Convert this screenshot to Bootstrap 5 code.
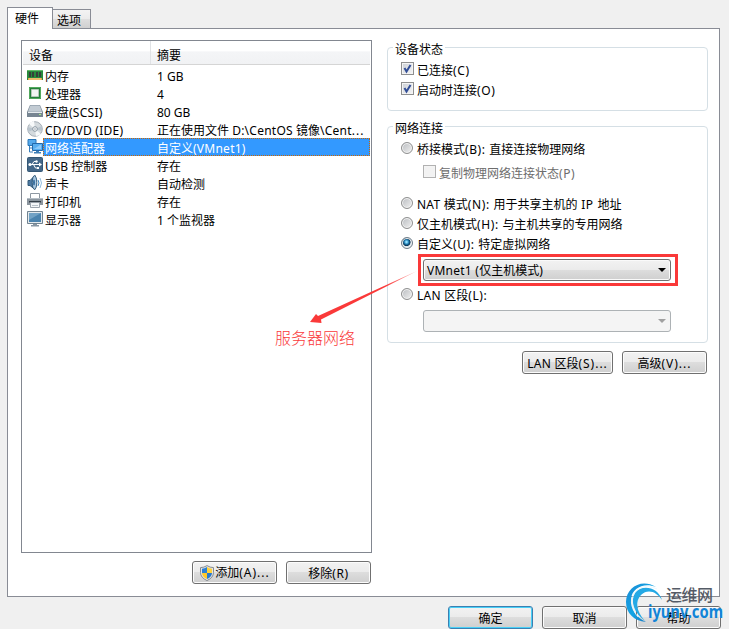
<!DOCTYPE html>
<html lang="zh-CN">
  <head>
    <meta charset="UTF-8" />
    <meta name="viewport" content="width=device-width, initial-scale=1.0" />
    <link
      href="https://cdn.jsdelivr.net/npm/bootstrap@5.3.3/dist/css/bootstrap.min.css"
      rel="stylesheet"
    />
    <title>虚拟机设置</title>
    <style>
      body {
        width: 729px;
        height: 629px;
        background: #f0f0f0;
        color: #000;
        font: 12px/18px "Noto Sans", "Noto Sans CJK SC", sans-serif;
      }
      svg { display: block; flex: none; }
      .lat { letter-spacing: .25px; }
      .key { letter-spacing: .6px; }
      .more { letter-spacing: 1px; }

      /* tabs */
      .tabs { height: 28px; padding: 7px 0 0 7px; }
      .tabs .nav-link { border: 1px solid #898c95; border-bottom: 0; border-radius: 0; color: #000; padding: 0; text-align: center; }
      .tabs .nav-link.active { width: 46px; height: 22px; line-height: 22px; padding-right: 6px; background: #fff; z-index: 1; }
      .tabs .other { width: 38px; height: 19px; line-height: 21px; margin-top: 2px; padding-right: 5px; border-left: 0; background: linear-gradient(#f3f3f3, #ebebeb 50%, #dedede 51%, #d0d0d0); }
      .panel { height: 569px; margin: 0 9px 0 7px; padding: 11px 11px 0 13px; border: 1px solid #898c95; background: #fff; }

      /* device list */
      .left-side { width: 351px; }
      .devices { height: 513px; border: 1px solid #828790; }
      .devices-head { height: 24px; margin: 0 1px 1px; border-bottom: 1px solid #d5d5d5; background: linear-gradient(#fff 45%, #f4f5f7 46%, #f1f2f4); line-height: 29px; }
      .devices-head .col-name { width: 128px; padding-left: 6px; border-right: 1px solid #e0e2e5; }
      .devices-head .col-info { padding-left: 6px; }
      .device { height: 18px; padding: 0 1px 0 5px; line-height: 21px; }
      .device > svg { margin-top: 1px; }
      .device.selected > svg { margin-top: 0; }
      .device-text { height: 18px; padding-left: 1px; white-space: nowrap; }
      .device-text .dev-name { width: 113px; padding-left: 1px; }
      .device.selected .device-text { padding-left: 0; border: 1px dotted #cc6600; background: #3399ff; color: #fff; line-height: 19px; }

      /* buttons */
      .btn-win { height: 23px; width: 85px; padding: 0; border: 1px solid #707070; border-radius: 3px; box-shadow: inset 0 0 0 1px #fcfcfc; background: linear-gradient(#f2f2f2, #ebebeb 49%, #dddddd 50%, #cfcfcf); color: #000; font-size: 12px; line-height: 24px; white-space: nowrap; }
      .btn-win.wide { width: 91px; }
      .btn-win.default { border-color: #3c7fb1; box-shadow: inset 0 0 0 1px #48d0f7; }
      .list-buttons { gap: 9px; margin-top: 8px; padding-right: 1px; }
      .net-buttons { gap: 9px; margin-top: 8px; padding-right: 1px; }
      .dialog-buttons { gap: 9px; margin-top: 9px; padding-right: 8px; }

      /* group boxes */
      .right-side { width: 321px; padding-top: 7px; }
      .group { border: 1px solid #d5dfe5; border-radius: 4px; padding: 0 0 0 13px; }
      .group-title { width: fit-content; height: 18px; margin: -9px 0 0 -8px; padding: 0 2px; line-height: 21px; background: #fff; }
      .status-box { height: 64px; margin-bottom: 15px; }
      .network-box { height: 217px; }
      .option { height: 20px; gap: 3px; line-height: 23px; white-space: nowrap; }
      .option.first { margin-top: 2px; }
      .option.sub { margin: 4px 0 11px 22px; color: #6d6d6d; }
      .option.last { margin-top: -1px; line-height: 22px; }
      .check { width: 13px; height: 13px; margin-top: 3px; border: 1px solid #8e8f8f; box-shadow: inset 0 0 0 1px #f4f4f4; background: linear-gradient(135deg, #cbcfd5, #f6f6f6); }
      .check.off { border-color: #b1b1b1; background: #f2f2f2; }
      .dot { width: 12px; height: 12px; flex: none; margin: 4px 1px 0 0; border: 1px solid #8e8f8f; border-radius: 50%; box-shadow: inset 0 0 0 1px #f4f4f4; background: linear-gradient(135deg, #b9bcc0, #f1f1f1); }
      .option.last .dot { margin-top: 3px; }
      .dot.on { border-color: #6d7c88; background: radial-gradient(circle at 45% 40%, #8fe0ff 0 8%, #1b7ab0 28%, #0b3150 46%, #d8e4ea 54%); }
      .highlight { width: 260px; height: 32px; margin: 1px 0 0 17px; border: 3px solid #fa3939; padding: 2px; }
      .combo { width: 248px; height: 22px; padding: 0 4px 0 3px; border: 1px solid #707070; border-radius: 3px; box-shadow: inset 0 0 0 1px #fafafa; background: linear-gradient(#f2f2f2, #ebebeb 49%, #dddddd 50%, #cfcfcf); line-height: 22px; }
      .combo > span { padding-top: 2px; }
      .combo.off { margin: 5px 0 0 22px; border-color: #adb2b5; background: #f4f4f4; box-shadow: none; }

      /* things drawn over the dialog */
      .arrow { position: absolute; left: 305px; top: 268px; }
      .note { position: absolute; left: 275px; top: 326px; color: #fa3939; font-size: 16px; font-weight: 300; line-height: 24px; }
      .stamp { position: absolute; left: 622px; top: 578px; }
    </style>
  </head>
  <body class="position-relative overflow-hidden">
    <nav class="tabs nav flex-nowrap align-items-start">
      <a class="nav-link active position-relative">硬件</a>
      <a class="nav-link other">选项</a>
    </nav>

    <main class="panel d-flex justify-content-between">
      <!-- 设备列表 -->
      <section class="left-side">
        <div class="devices">
          <div class="devices-head d-flex">
            <div class="col-name">设备</div>
            <div class="col-info">摘要</div>
          </div>
          <div class="device d-flex">
            <svg width="16" height="16" viewBox="0 0 16 16"><path d="M0 3h16v10H0z" fill="#288a3c"/><path d="M0 3h16v1H0z" fill="#62b86a"/><path d="M2 5h2v5H2zM5 5h2v5H5zM9 5h2v5H9zM12 5h2v5h-2z" fill="#36403b"/><path d="M1 11h14v2H1z" fill="#e7a044"/><path d="M3 11v2M5 11v2M7 11v2M9 11v2M11 11v2M13 11v2" stroke="#fff0bc" stroke-width=".7"/></svg>
            <div class="device-text d-flex flex-grow-1"><span class="dev-name">内存</span><span>1 GB</span></div>
          </div>
          <div class="device d-flex">
            <svg width="16" height="16" viewBox="0 0 16 16"><path d="M2 2h12v12H2z" fill="#24813a"/><path d="M2.500 2.500h11v11h-11z" fill="none" stroke="#52a85d"/><path d="M4.500 4.500h7v7h-7z" fill="#f1f5f2" stroke="#b6c8ba"/></svg>
            <div class="device-text d-flex flex-grow-1"><span class="dev-name">处理器</span><span>4</span></div>
          </div>
          <div class="device d-flex">
            <svg width="16" height="16" viewBox="0 0 16 16"><path d="M3 2h10l3 7v4H0V9z" fill="#7d8b98"/><path d="M3.300 2.500h9.400l2.300 6.200H1z" fill="#c2cbd3"/><path d="M0 9h16v5H0z" fill="#778592"/><path d="M1 9.500h14" stroke="#e5eaed"/><path d="M12 11h2v1h-2z" fill="#a7ed83"/></svg>
            <div class="device-text d-flex flex-grow-1"><span class="dev-name">硬盘<span class="lat">(SCSI)</span></span><span>80 GB</span></div>
          </div>
          <div class="device d-flex">
            <svg width="16" height="16" viewBox="0 0 16 16"><circle cx="8" cy="8" r="7.300" fill="#d4dade" stroke="#a5adb5"/><path d="M8 8 2 3a8 8 0 0 1 5-3zM8 8l6 5a8 8 0 0 1-5 2z" fill="#f7f9fa"/><path d="m8 8 7-3v5zM8 8l-7 3V6z" fill="#b9c4cd"/><circle cx="8" cy="8" r="2.300" fill="#fff" stroke="#8795a1"/><circle cx="8" cy="8" r=".8" fill="#8795a1"/></svg>
            <div class="device-text d-flex flex-grow-1"><span class="dev-name lat">CD/DVD (IDE)</span><span>正在使用文件 <span class="lat">D:\CentOS</span> 镜像<span class="lat">\Cent</span><span class="more">...</span></span></div>
          </div>
          <div class="device selected d-flex">
            <svg width="16" height="17" viewBox="0 0 16 17"><path d="M1 1.500h8v6H1z" fill="#55aaed" stroke="#2874b6"/><path d="M2.500 8v6H6M2.500 10H5" fill="none" stroke="#397dba"/><path d="M5.500 5.500h10v7h-10z" fill="#58aef0" stroke="#2369ab"/><path d="m7 11 6-4h1v4z" fill="#8bcafa"/><path d="M9 13h3v1h2v1.500H7V14h2z" fill="#3d7eb7"/></svg>
            <div class="device-text d-flex flex-grow-1"><span class="dev-name">网络适配器</span><span>自定义<span class="lat">(VMnet1)</span></span></div>
          </div>
          <div class="device d-flex">
            <svg width="16" height="16" viewBox="0 0 16 16"><rect x=".5" y=".5" width="15" height="14" rx="1" fill="#446788" stroke="#345775"/><path d="M2.500 7.500H12M5 7.500 7 4.500h2M6.500 7.500 8.500 11H11" fill="none" stroke="#fff"/><circle cx="3" cy="7.500" r="1.600" fill="#fff"/><circle cx="9.500" cy="4.500" r="1.200" fill="#fff"/><path d="M10 10h2v2h-2zM12 5.500l3 2-3 2z" fill="#fff"/></svg>
            <div class="device-text d-flex flex-grow-1"><span class="dev-name">USB 控制器</span><span>存在</span></div>
          </div>
          <div class="device d-flex">
            <svg width="16" height="16" viewBox="0 0 16 16"><path d="M1 5.500h2l5-5v14l-5-4H1z" fill="#4e7aa3" stroke="#315878"/><ellipse cx="7.500" cy="7.500" rx="2.300" ry="6.800" fill="#a9c8e2" stroke="#315878"/><ellipse cx="7" cy="7.500" rx="1" ry="3" fill="#376d9d"/><path d="M11 5q2 3 0 6" fill="none" stroke="#3d87bf"/><path d="M13 3q3 5 0 10" fill="none" stroke="#92bee1"/></svg>
            <div class="device-text d-flex flex-grow-1"><span class="dev-name">声卡</span><span>自动检测</span></div>
          </div>
          <div class="device d-flex">
            <svg width="16" height="16" viewBox="0 0 16 16"><path d="M3.500 .5h9v6h-9z" fill="#fff" stroke="#8e98a2"/><path d="M0 5h16v7H0z" fill="#8b959e"/><path d="M0 5.500h16" stroke="#b5bec6"/><path d="M2 8h12v1.500H2z" fill="#343d46"/><path d="M3.500 9.500h9v5h-9z" fill="#f4f6f8" stroke="#9ba3ac"/><path d="M5 12.500h6" stroke="#bac2ca"/></svg>
            <div class="device-text d-flex flex-grow-1"><span class="dev-name">打印机</span><span>存在</span></div>
          </div>
          <div class="device d-flex">
            <svg width="16" height="16" viewBox="0 0 16 16"><path d="M.5 .5h15v12H.5z" fill="#e3e9ed" stroke="#718391"/><path d="M2 2h12v9H2z" fill="#4a83ae"/><path d="M2 2h12L2 9z" fill="#72a2c5"/><path d="M6 13h4v1h2v1.500H4V14h2z" fill="#8796a3"/></svg>
            <div class="device-text d-flex flex-grow-1"><span class="dev-name">显示器</span><span>1 个监视器</span></div>
          </div>
        </div>
        <div class="list-buttons d-flex justify-content-end">
          <button type="button" class="btn btn-win d-flex align-items-center justify-content-center">
            <svg width="16" height="16" viewBox="0 0 16 16"><path d="M8 .6q3 2 6.500 2v5q0 5-6.500 8-6.500-3-6.500-8v-5q3.500 0 6.500-2z" fill="#e5e5e5" stroke="#858b91"/><path d="M8 2Q5.500 3.500 3 3.700V8h5z" fill="#2a80d5"/><path d="M8 2q2.500 1.500 5 1.700V8H8z" fill="#ffd23a"/><path d="M3 8q.3 4 5 6V8z" fill="#ffc928"/><path d="M8 8v6q4.700-2 5-6z" fill="#2879cd"/></svg>添加<span class="more">(A)...</span>
          </button>
          <button type="button" class="btn btn-win">移除<span class="key">(R)</span></button>
        </div>
      </section>

      <section class="right-side">
        <div class="group status-box">
          <div class="group-title">设备状态</div>
          <div class="option first d-flex"><span class="check"><svg width="11" height="11" viewBox="0 0 11 11"><path d="m2.500 5 2 3.500L8.500 2" fill="none" stroke="#324e96" stroke-width="2"/></svg></span><span>已连接<span class="key">(C)</span></span></div>
          <div class="option d-flex"><span class="check"><svg width="11" height="11" viewBox="0 0 11 11"><path d="m2.500 5 2 3.500L8.500 2" fill="none" stroke="#324e96" stroke-width="2"/></svg></span><span>启动时连接<span class="key">(O)</span></span></div>
        </div>

        <div class="group network-box">
          <div class="group-title">网络连接</div>
          <div class="option first d-flex"><span class="dot"></span><span>桥接模式<span class="key">(B): </span>直接连接物理网络</span></div>
          <div class="option sub d-flex"><span class="check off"></span><span>复制物理网络连接状态<span class="key">(P)</span></span></div>
          <div class="option d-flex"><span class="dot"></span><span><span class="lat">NAT </span>模式<span class="key">(N): </span>用于共享主机的<span class="key"> IP </span>地址</span></div>
          <div class="option d-flex"><span class="dot"></span><span>仅主机模式<span class="key">(H): </span>与主机共享的专用网络</span></div>
          <div class="option d-flex"><span class="dot on"></span><span>自定义<span class="key">(U): </span>特定虚拟网络</span></div>
          <div class="highlight">
            <div class="combo d-flex align-items-center justify-content-between"><span><span class="lat">VMnet1 (</span>仅主机模式)</span><svg width="8" height="4" viewBox="0 0 8 4"><path d="M0 0h8L4 4z"/></svg></div>
          </div>
          <div class="option last d-flex"><span class="dot"></span><span><span class="lat">LAN </span>区段<span class="key">(L):</span></span></div>
          <div class="combo off d-flex align-items-center justify-content-end"><svg width="8" height="4" viewBox="0 0 8 4"><path d="M0 0h8L4 4z" fill="#a0a0a0"/></svg></div>
        </div>
        <div class="net-buttons d-flex justify-content-end">
          <button type="button" class="btn btn-win wide"><span class="lat">LAN </span>区段<span class="more">(S)...</span></button>
          <button type="button" class="btn btn-win">高级<span class="more">(V)...</span></button>
        </div>
      </section>
    </main>

    <footer class="dialog-buttons d-flex justify-content-end">
      <button type="button" class="btn btn-win default">确定</button>
      <button type="button" class="btn btn-win">取消</button>
      <button type="button" class="btn btn-win">帮助</button>
    </footer>

    <svg class="arrow" width="114" height="56" viewBox="0 0 114 56">
      <defs>
        <linearGradient id="tail" x1="1" y1="0" x2="0" y2="0">
          <stop offset="0" stop-color="#fa3939" stop-opacity=".4" />
          <stop offset=".3" stop-color="#fa3939" />
        </linearGradient>
      </defs>
      <path d="M113 3 15.500 52 16 55 5 54l8-8 1 2.500z" fill="none"/>
      <path d="M112 3 16 51.500 16.500 55 5 54l6-8 2 2z" fill="url(#tail)"/>
    </svg>
    <div class="note">服务器网络</div>

    <svg class="stamp" width="107" height="51" viewBox="0 0 107 51">
      <defs>
        <linearGradient id="ring" x1="0" y1="0" x2="1" y2="1">
          <stop offset="0" stop-color="#1c8bd4" />
          <stop offset=".5" stop-color="#12a4e5" />
          <stop offset="1" stop-color="#1b65b1" />
        </linearGradient>
      </defs>
      <path d="M34 9C20 0 4 9 4 24c0 11 8 19 20 20C14 39 8 31 9 21 10 10 22 4 34 9z" fill="url(#ring)"/>
      <path d="M40 22C36 9 20 6 13 15c-5 8-1 20 10 28C14 33 13 23 19 17c7-7 16-3 21 5z" fill="#25a9e5"/>
      <path d="M35 11C24 6 14 9 11 18c-2 7 0 15 5 21" fill="none" stroke="#e9f8ff" stroke-width=".8"/>
      <text x="44" y="22.500" font-size="16" font-weight="500" textLength="47" fill="#555b66">运维网</text>
      <text x="26" y="39.500" font-family="Noto Sans" font-size="18" font-weight="700" textLength="75" lengthAdjust="spacingAndGlyphs" fill="#1284d7">iyunv.com</text>
    </svg>

    <script src="https://cdn.jsdelivr.net/npm/bootstrap@5.3.3/dist/js/bootstrap.bundle.min.js"></script>
  </body>
</html>
